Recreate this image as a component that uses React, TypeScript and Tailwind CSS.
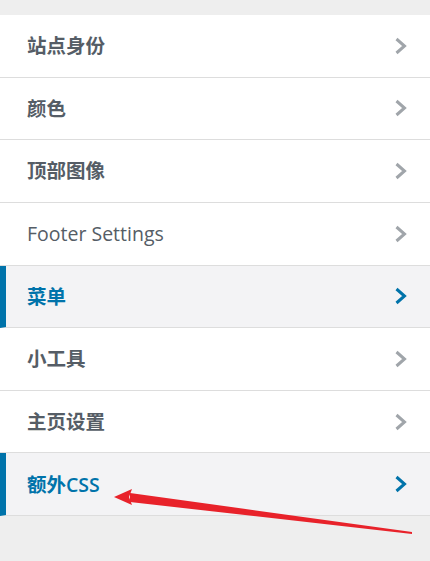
import React from "react";

interface Section {
  label: string;
  active?: boolean;
}

const sections: Section[] = [
  { label: "站点身份" },
  { label: "颜色" },
  { label: "顶部图像" },
  { label: "Footer Settings" },
  { label: "菜单", active: true },
  { label: "小工具" },
  { label: "主页设置" },
  { label: "额外CSS", active: true },
];

// split CJK runs from latin so the latin part keeps a lighter weight
const Label = ({ text }: { text: string }) => {
  const parts = text.match(/[\u4e00-\u9fff]+|[^\u4e00-\u9fff]+/g) || [];
  return (
    <>
      {parts.map((p, i) =>
        /[\u4e00-\u9fff]/.test(p) ? (
          <span key={i} className="font-bold">
            {p}
          </span>
        ) : (
          <span key={i} className={text.length < 8 ? "font-semibold" : "font-normal"}>
            {p}
          </span>
        )
      )}
    </>
  );
};

const Chevron = ({ active }: { active?: boolean }) => (
  <svg width="14" height="18" viewBox="0 0 14 18" className={active ? "text-[#0073aa]" : "text-[#a0a5aa]"}>
    <polyline points="2.5,2 10.5,9 2.5,16" fill="none" stroke="currentColor" strokeWidth="3" />
  </svg>
);

export default function App() {
  return (
    <div
      className="relative h-[561px] w-[430px] overflow-hidden bg-[#eeeeee] pt-[15px]"
      style={{ fontFamily: '"Open Sans", "Noto Sans CJK SC", sans-serif' }}
    >
      <ul>
        {sections.map((s) => (
          <li
            key={s.label}
            className={
              "box-border flex h-[62.65px] items-center justify-between border-b border-[#dddddd] pr-[22px] " +
              (s.active
                ? "border-l-[6px] border-l-[#0073aa] bg-[#f3f3f5] pl-[21px] text-[#0073aa]"
                : "bg-white pl-[27px] text-[#555d66]")
            }
          >
            <span className="text-[19.5px] leading-none">
              <Label text={s.label} />
            </span>
            <Chevron active={s.active} />
          </li>
        ))}
      </ul>

      {/* annotation arrow */}
      <svg className="pointer-events-none absolute inset-0" width="430" height="561" viewBox="0 0 430 561">
        <polygon points="412,532 412,534 130,502 130,493" fill="#e8222a" />
        <polygon points="114,497 132,489 129,497 132,505" fill="#e8222a" />
      </svg>
    </div>
  );
}
